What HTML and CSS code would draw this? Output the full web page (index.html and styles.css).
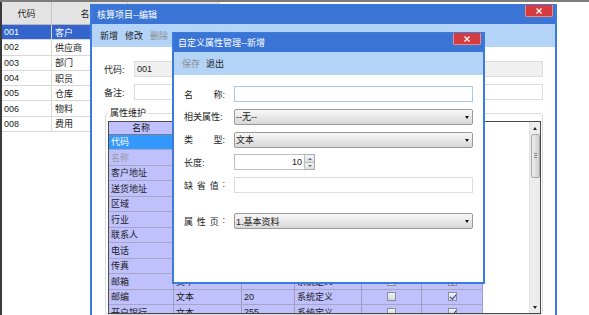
FILE: index.html
```html
<!DOCTYPE html>
<html>
<head>
<meta charset="utf-8">
<title>核算项目--编辑</title>
<link rel="stylesheet" href="styles.css">
</head>
<body>
<div class="desk">

  <div class="list">
    <div class="list-head"><div class="lc-code">代码</div><div class="lc-name">名称</div></div>
    <div class="list-row selected"><div class="lc-code">001</div><div class="lc-name">客户</div></div>
    <div class="list-row"><div class="lc-code">002</div><div class="lc-name">供应商</div></div>
    <div class="list-row"><div class="lc-code">003</div><div class="lc-name">部门</div></div>
    <div class="list-row"><div class="lc-code">004</div><div class="lc-name">职员</div></div>
    <div class="list-row"><div class="lc-code">005</div><div class="lc-name">仓库</div></div>
    <div class="list-row"><div class="lc-code">006</div><div class="lc-name">物料</div></div>
    <div class="list-row"><div class="lc-code">008</div><div class="lc-name">费用</div></div>
  </div>

  <div class="win win-edit">
    <div class="win-title">核算项目--编辑
      <span class="win-close"><svg width="6" height="6" viewBox="0 0 6 6"><path d="M0.5 0.5 L5.5 5.5 M5.5 0.5 L0.5 5.5"/></svg></span>
    </div>
    <div class="toolbar"><span>新增</span><span>修改</span><span class="disabled">删除</span></div>
    <div class="edit-body">
      <div class="edit-row"><label>代码:</label><div class="text-box readonly">001</div></div>
      <div class="edit-row"><label>备注:</label><div class="text-box"></div></div>
      <fieldset class="attr-set">
        <legend>属性维护</legend>
        <div class="grid">
          <div class="grid-table">
            <!-- only the name column shows beside the open dialog -->
            <div class="grid-row grid-head"><div class="g1">名称</div><div class="g2"></div><div class="g3"></div><div class="g4"></div><div class="g5"></div><div class="g6"></div></div>
            <div class="grid-row current"><div class="g1">代码</div><div class="g2"></div><div class="g3"></div><div class="g4"></div><div class="g5"></div><div class="g6"></div></div>
            <div class="grid-row off"><div class="g1">名称</div><div class="g2"></div><div class="g3"></div><div class="g4"></div><div class="g5"></div><div class="g6"></div></div>
            <div class="grid-row"><div class="g1">客户地址</div><div class="g2"></div><div class="g3"></div><div class="g4"></div><div class="g5"></div><div class="g6"></div></div>
            <div class="grid-row"><div class="g1">送货地址</div><div class="g2"></div><div class="g3"></div><div class="g4"></div><div class="g5"></div><div class="g6"></div></div>
            <div class="grid-row"><div class="g1">区域</div><div class="g2"></div><div class="g3"></div><div class="g4"></div><div class="g5"></div><div class="g6"></div></div>
            <div class="grid-row"><div class="g1">行业</div><div class="g2"></div><div class="g3"></div><div class="g4"></div><div class="g5"></div><div class="g6"></div></div>
            <div class="grid-row"><div class="g1">联系人</div><div class="g2"></div><div class="g3"></div><div class="g4"></div><div class="g5"></div><div class="g6"></div></div>
            <div class="grid-row"><div class="g1">电话</div><div class="g2"></div><div class="g3"></div><div class="g4"></div><div class="g5"></div><div class="g6"></div></div>
            <div class="grid-row"><div class="g1">传真</div><div class="g2"></div><div class="g3"></div><div class="g4"></div><div class="g5"></div><div class="g6"></div></div>
            <div class="grid-row"><div class="g1">邮箱</div><div class="g2">文本</div><div class="g3">40</div><div class="g4">系统定义</div><div class="g5"><span class="chk"></span></div><div class="g6"><span class="chk on"></span></div></div>
            <div class="grid-row"><div class="g1">邮编</div><div class="g2">文本</div><div class="g3">20</div><div class="g4">系统定义</div><div class="g5"><span class="chk"></span></div><div class="g6"><span class="chk on"></span></div></div>
            <div class="grid-row"><div class="g1">开户银行</div><div class="g2">文本</div><div class="g3">255</div><div class="g4">系统定义</div><div class="g5"><span class="chk"></span></div><div class="g6"><span class="chk on"></span></div></div>
          </div>
          <div class="vscroll">
            <span class="arrow-up"></span>
            <span class="thumb"></span>
            <span class="arrow-down"></span>
          </div>
        </div>
      </fieldset>
    </div>
  </div>

  <div class="win win-attr">
    <div class="win-title">自定义属性管理--新增
      <span class="win-close"><svg width="6" height="6" viewBox="0 0 6 6"><path d="M0.5 0.5 L5.5 5.5 M5.5 0.5 L0.5 5.5"/></svg></span>
    </div>
    <div class="toolbar tight"><span class="disabled">保存</span><span>退出</span></div>
    <div class="attr-body">
      <div class="field">
        <div class="field-label"><span class="spread"><span>名</span><span>称:</span></span></div>
        <div class="text-box focus"></div>
      </div>
      <div class="field">
        <div class="field-label">相关属性:</div>
        <div class="select">--无--</div>
      </div>
      <div class="field">
        <div class="field-label"><span class="spread"><span>类</span><span>型:</span></span></div>
        <div class="select">文本</div>
      </div>
      <div class="field">
        <div class="field-label">长度:</div>
        <div class="spin">
          <div class="spin-value">10</div>
          <div class="spin-btns"><span class="spin-up"></span><span class="spin-down"></span></div>
        </div>
      </div>
      <div class="field">
        <div class="field-label"><span class="spread"><span>缺</span><span>省</span><span>值</span><span>:</span></span></div>
        <div class="text-box"></div>
      </div>
      <div class="field page">
        <div class="field-label"><span class="spread"><span>属</span><span>性</span><span>页</span><span>:</span></span></div>
        <div class="select">1.基本资料</div>
      </div>
    </div>
  </div>

</div>
</body>
</html>
```

FILE: styles.css
```css
* {
  box-sizing: border-box;
}

body {
  margin: 0;
  background: #fff;
  font-family: "Liberation Sans", "Noto Sans CJK SC", sans-serif;
  font-size: 9px;
  color: #1c1c1c;
  overflow: hidden;
}

.desk {
  position: relative;
  width: 589px;
  height: 315px;
  border-top: 2px solid #7c7c7c;
  overflow: hidden;
}

/* list behind the dialogs */
.list {
  width: 220px;
  height: 313px;
  border-left: 2px solid #3a3a3a;
}

.list-head,
.list-row {
  display: flex;
}

.list-head {
  height: 23px;
  background: #e3e3e3;
  border-bottom: 1px solid #b8b8b8;
}

.list-head > div {
  display: flex;
  align-items: center;
  justify-content: center;
  border-right: 1px solid #c6c6c6;
}

.list-row {
  height: 15.3px;
  border-bottom: 1px solid #d8d8d8;
}

.list-row > div {
  display: flex;
  align-items: center;
  border-right: 1px solid #d8d8d8;
}

.lc-code {
  width: 50px;
  padding-left: 2px;
}

.lc-name {
  width: 76px;
  padding-left: 3px;
}

.list-head .lc-code,
.list-head .lc-name {
  padding-left: 0;
}

.list-row.selected {
  background: #3465cc;
  color: #fff;
}

/* windows */
.win {
  position: absolute;
  display: flex;
  flex-direction: column;
  background: #fff;
  border: 2px solid #3b7be0;
  border-top-width: 1px;
}

.win-edit {
  left: 90px;
  top: 2px;
  width: 467px;
  height: 330px;
}

.win-attr {
  left: 172px;
  top: 30px;
  width: 313px;
  height: 252px;
}

.win-title {
  position: relative;
  flex: none;
  height: 19px;
  display: flex;
  align-items: center;
  padding-left: 5px;
  background: #3a74d5;
  color: #fff;
}

.win-attr .win-title {
  padding-left: 4px;
}

.win-close {
  position: absolute;
  right: 2px;
  top: 0;
  width: 28px;
  height: 12px;
  display: flex;
  align-items: center;
  justify-content: center;
  background: #d63c3f;
  border: 1px solid #ec8a8a;
  border-top: 0;
  border-radius: 0 0 2px 2px;
}

.win-close svg path {
  stroke: #fff;
  stroke-width: 1.3;
  fill: none;
}

.toolbar {
  flex: none;
  height: 23px;
  display: flex;
  align-items: center;
  gap: 7px;
  padding-left: 8px;
  background: #b3d3f7;
}

.toolbar.tight {
  gap: 6px;
}

.disabled {
  color: #8e8e8e;
}

/* edit window body */
.edit-body {
  padding: 14px 12px 0 12px;
}

.edit-row {
  display: flex;
  align-items: center;
  height: 16px;
  margin-bottom: 7px;
}

.edit-row label {
  width: 30px;
  flex: none;
}

.text-box {
  flex: 1;
  height: 16px;
  display: flex;
  align-items: center;
  padding-left: 2px;
  background: #fff;
  border: 1px solid #dcdcdc;
}

.text-box.readonly {
  background: #f0f0f0;
}

.text-box.focus {
  border-color: #a9c8ea;
}

.attr-set {
  margin: 1.5px 0 0 1px;
  padding: 0 1px 0 2px;
  min-width: 0;
  border: 1px solid #dadada;
  border-radius: 3px;
}

.attr-set legend {
  margin-left: 0;
  padding: 0 2px;
  line-height: 13px;
}

.grid {
  display: flex;
  height: 193px;
  margin-top: 0.5px;
  border: 1px solid #4a4a4a;
  overflow: hidden;
}

.grid-table {
  flex: 1;
}

.grid-row {
  display: flex;
  height: 15.5px;
}

.grid-row > div {
  display: flex;
  align-items: center;
  padding-left: 2px;
  background: #c0c0fc;
  border-right: 1px solid #9d9dbd;
  border-bottom: 1px solid #a5a5c4;
}

.grid-head {
  height: 13px;
}

.grid-head > div {
  justify-content: center;
  padding-left: 0;
  border-color: #7a7a8c;
}

.grid-row.current > div {
  background: #3399ff;
  color: #fff;
}

.grid-row.off .g1 {
  color: #9a9aae;
}

.g1 { width: 65px; }
.g2 { width: 68px; }
.g3 { width: 53px; }
.g4 { width: 67px; }
.g5 { width: 60px; }
.g6 { width: 61px; }

.grid-row .g5,
.grid-row .g6 {
  justify-content: center;
  padding-left: 0;
}

.chk {
  position: relative;
  width: 9px;
  height: 9px;
  border: 1px solid #8c8c9c;
  background: linear-gradient(#f2f2f2, #d6d6dc);
}

.chk.on::after {
  content: "";
  position: absolute;
  left: 2.5px;
  top: 0;
  width: 2.5px;
  height: 5px;
  border-right: 1.3px solid #1f3f9a;
  border-bottom: 1.3px solid #1f3f9a;
  transform: rotate(40deg);
}

.vscroll {
  flex: none;
  width: 11px;
  display: flex;
  flex-direction: column;
  align-items: center;
  background: #ececec;
  border-left: 1px solid #e2e2e2;
}

.arrow-up {
  margin-top: 5px;
  border-left: 2.5px solid transparent;
  border-right: 2.5px solid transparent;
  border-bottom: 3px solid #222;
}

.thumb {
  position: relative;
  margin-top: 4px;
  width: 9px;
  height: 44px;
  border: 1px solid #a8a8a8;
  border-radius: 2px;
  background: linear-gradient(to right, #f0f0f0, #cdcdcd);
}

.thumb::after {
  content: "";
  position: absolute;
  left: 2px;
  right: 2px;
  top: 18px;
  height: 6px;
  background: repeating-linear-gradient(#8a8a8a 0, #8a8a8a 1px, transparent 1px, transparent 2px);
}

.arrow-down {
  margin-top: auto;
  margin-bottom: 4px;
  border-left: 2.5px solid transparent;
  border-right: 2.5px solid transparent;
  border-top: 3px solid #222;
}

/* attribute window body */
.attr-body {
  display: flex;
  flex-direction: column;
  gap: 6.75px;
  padding: 11px 10px 0 10px;
}

.field {
  display: flex;
  align-items: center;
  height: 16px;
}

.field.page {
  margin-top: 13.25px;
}

.field-label {
  flex: none;
  width: 50px;
}

.spread {
  display: flex;
  justify-content: space-between;
  width: 41px;
}

.select {
  position: relative;
  flex: 1;
  height: 16px;
  display: flex;
  align-items: center;
  padding-left: 1px;
  background: linear-gradient(#f8f8f8, #d8d8d8);
  border: 1px solid #9a9a9a;
  border-radius: 2px;
}

.select::after {
  content: "";
  position: absolute;
  right: 3px;
  top: 6px;
  border-left: 2px solid transparent;
  border-right: 2px solid transparent;
  border-top: 3px solid #111;
}

.spin {
  display: flex;
  width: 81px;
  height: 16px;
}

.spin-value {
  width: 71px;
  display: flex;
  align-items: center;
  justify-content: flex-end;
  padding-right: 2px;
  border: 1px solid #bdbdbd;
}

.spin-btns {
  width: 10px;
  display: flex;
  flex-direction: column;
  border: 1px solid #a9a9a9;
  border-left: 0;
}

.spin-btns span {
  flex: 1;
  display: flex;
  align-items: center;
  justify-content: center;
  background: linear-gradient(#f6f6f6, #dcdcdc);
}

.spin-btns span + span {
  border-top: 1px solid #b8b8b8;
}

.spin-up::after,
.spin-down::after {
  content: "";
  border-left: 2px solid transparent;
  border-right: 2px solid transparent;
}

.spin-up::after {
  border-bottom: 2px solid #4f6f9f;
}

.spin-down::after {
  border-top: 2px solid #4f6f9f;
}
```
